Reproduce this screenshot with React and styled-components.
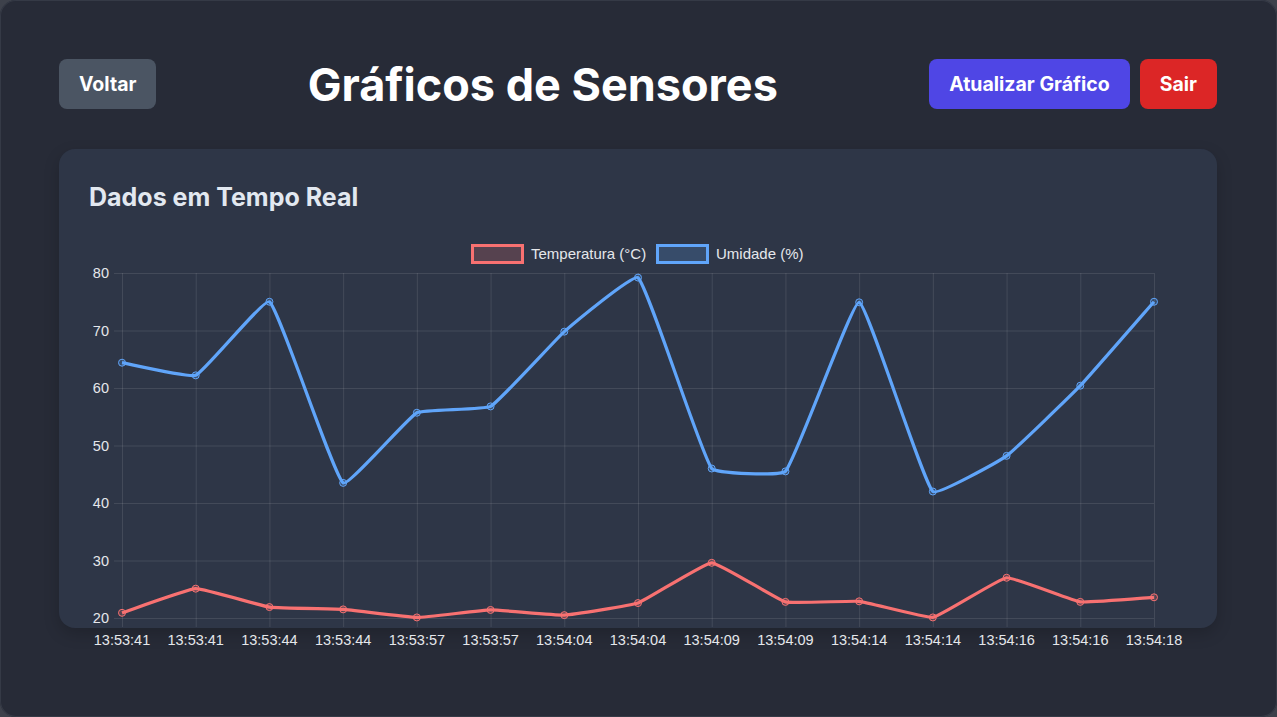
import React from 'react';
import styled, { createGlobalStyle } from 'styled-components';

const GlobalStyle = createGlobalStyle`
  html, body {
    margin: 0;
    padding: 0;
    background: #3d414b;
  }
  body {
    font-family: Inter, "Noto Sans", sans-serif;
  }
`;

const Frame = styled.div`
  box-sizing: border-box;
  width: 1277px;
  height: 717px;
  background: #272b37;
  border-radius: 16px;
  box-shadow: inset 0 0 0 1px #353a46;
  padding: 59px 60px 0 59px;
  overflow: hidden;
`;

const Header = styled.header`
  display: flex;
  align-items: center;
  justify-content: space-between;
  height: 50px;
  margin-bottom: 40px;
`;

const Title = styled.h1`
  margin: 0;
  font-size: 45px;
  font-weight: 700;
  color: #ffffff;
`;

const Actions = styled.div`
  display: flex;
  gap: 10px;
`;

const Button = styled.button`
  height: 50px;
  padding: 0 20px;
  border: none;
  border-radius: 8px;
  background: ${p => p.$bg};
  color: #ffffff;
  font-family: Inter, "Noto Sans", sans-serif;
  font-size: 19.5px;
  font-weight: 700;
  cursor: pointer;
`;

const Card = styled.section`
  box-sizing: border-box;
  height: 479px;
  background: #2e3647;
  border-radius: 16px;
  padding: 30px 30px 0;
  box-shadow: 0 6px 16px rgba(0, 0, 0, 0.18);
`;

const CardTitle = styled.h2`
  margin: 0 0 20px;
  font-size: 25px;
  line-height: 36px;
  font-weight: 700;
  color: #e2e8f0;
`;

const ChartSvg = styled.svg`
  display: block;
  overflow: visible;
  font-family: "Liberation Sans", Arial, sans-serif;
`;

const times = [
  '13:53:41', '13:53:41', '13:53:44', '13:53:44', '13:53:57', '13:53:57', '13:54:04',
  '13:54:04', '13:54:09', '13:54:09', '13:54:14', '13:54:14', '13:54:16', '13:54:16', '13:54:18',
];
const humidity = [64.4, 62.2, 75, 43.5, 55.7, 56.8, 69.8, 79.2, 46, 45.5, 74.9, 42, 48.2, 60.4, 75];
const temperature = [20.9, 25.1, 21.9, 21.5, 20.1, 21.4, 20.5, 22.6, 29.6, 22.8, 22.9, 20.1, 27, 22.8, 23.6];

const LEFT = 122;
const STEP = (1154 - 122) / 14;
const TOP = 273;
const PER = 5.75;
const px = i => LEFT + i * STEP;
const py = v => TOP + (80 - v) * PER;

// chart.js style spline
const splinePath = (values, t) => {
  const pts = values.map((v, i) => ({ x: px(i), y: py(v) }));
  const ctrl = pts.map((cur, i) => {
    const prev = pts[i - 1] || cur;
    const next = pts[i + 1] || cur;
    const d01 = Math.hypot(cur.x - prev.x, cur.y - prev.y);
    const d12 = Math.hypot(next.x - cur.x, next.y - cur.y);
    let s01 = d01 / (d01 + d12);
    let s12 = d12 / (d01 + d12);
    s01 = isNaN(s01) ? 0 : s01;
    s12 = isNaN(s12) ? 0 : s12;
    const fa = t * s01;
    const fb = t * s12;
    const clampY = y => Math.min(618, Math.max(273, y));
    return {
      px: cur.x - fa * (next.x - prev.x),
      py: clampY(cur.y - fa * (next.y - prev.y)),
      nx: cur.x + fb * (next.x - prev.x),
      ny: clampY(cur.y + fb * (next.y - prev.y)),
    };
  });
  let d = `M${pts[0].x},${pts[0].y}`;
  for (let i = 1; i < pts.length; i++) {
    d += ` C${ctrl[i - 1].nx},${ctrl[i - 1].ny} ${ctrl[i].px},${ctrl[i].py} ${pts[i].x},${pts[i].y}`;
  }
  return d;
};

const Series = ({ values, color, fill }) => (
  <g>
    <path d={splinePath(values, 0.1)} fill="none" stroke={color} strokeWidth="3.2" strokeLinejoin="round" />
    {values.map((v, i) => (
      <circle key={i} cx={px(i)} cy={py(v)} r="3.5" fill={fill} stroke={color} strokeWidth="1" />
    ))}
  </g>
);

const Chart = () => {
  const grid = 'rgba(255,255,255,0.1)';
  const label = '#e5e7eb';
  return (
    <ChartSvg width="1098" height="420" viewBox="89 235 1098 420">
      <g>
        <rect x="472.5" y="245.5" width="50" height="17" fill="rgba(248,113,113,0.2)" stroke="#f87171" strokeWidth="3" />
        <text x="531" y="258.5" fontSize="15" fill={label}>Temperatura (°C)</text>
        <rect x="657.5" y="245.5" width="50" height="17" fill="rgba(96,165,250,0.2)" stroke="#60a5fa" strokeWidth="3" />
        <text x="716" y="258.5" fontSize="15" fill={label}>Umidade (%)</text>
      </g>
      {[80, 70, 60, 50, 40, 30, 20].map(v => (
        <g key={v}>
          <line x1="114" x2="1154" y1={py(v) + 0.5} y2={py(v) + 0.5} stroke={grid} />
          <text x="109" y={py(v) + 5} fontSize="14.5" fill={label} textAnchor="end">{v}</text>
        </g>
      ))}
      {times.map((tm, i) => (
        <g key={i}>
          <line x1={px(i) + 0.5} x2={px(i) + 0.5} y1="273" y2="627" stroke={grid} />
          <text x={px(i)} y="645" fontSize="14.5" fill={label} textAnchor="middle">{tm}</text>
        </g>
      ))}
      <Series values={humidity} color="#60a5fa" fill="rgba(96,165,250,0.2)" />
      <Series values={temperature} color="#f87171" fill="rgba(248,113,113,0.2)" />
    </ChartSvg>
  );
};

const App = () => (
  <>
    <GlobalStyle />
    <Frame>
      <Header>
        <Button $bg="#4b5563">Voltar</Button>
        <Title>Gráficos de Sensores</Title>
        <Actions>
          <Button $bg="#4f46e5">Atualizar Gráfico</Button>
          <Button $bg="#dc2626">Sair</Button>
        </Actions>
      </Header>
      <Card>
        <CardTitle>Dados em Tempo Real</CardTitle>
        <Chart />
      </Card>
    </Frame>
  </>
);

export default App;
